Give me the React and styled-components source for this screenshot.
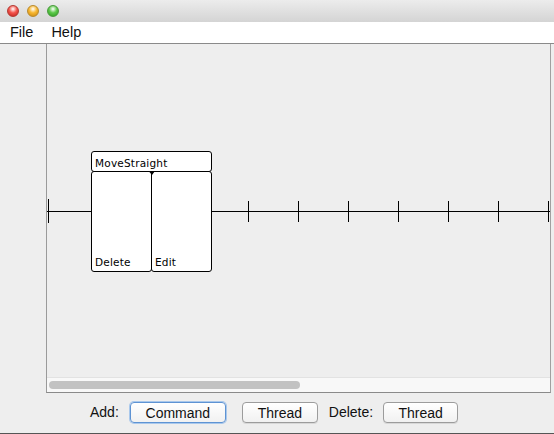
import React from 'react'
import styled, { createGlobalStyle } from 'styled-components'

const Global = createGlobalStyle`
  html, body {
    margin: 0;
    padding: 0;
    background: #eeeeee;
  }
  body {
    font-family: "Liberation Sans", Arial, sans-serif;
  }
`

const Window = styled.div`
  width: 554px;
  height: 434px;
  display: flex;
  flex-direction: column;
  background: #eeeeee;
  box-sizing: border-box;
  border-bottom: 1px solid #555555;
  overflow: hidden;
`

const TitleBar = styled.div`
  height: 22px;
  flex-shrink: 0;
  display: flex;
  align-items: center;
  gap: 8px;
  padding-left: 7px;
  box-sizing: border-box;
  background: linear-gradient(#ececec, #d4d4d4);
`

const Light = styled.span`
  width: 12px;
  height: 12px;
  border-radius: 50%;
  box-sizing: border-box;
  border: 1px solid ${p => p.$edge};
  background: radial-gradient(circle at 50% 30%, #ffffff 0%, ${p => p.$color} 45%, ${p => p.$dark} 100%);
`

const MenuBar = styled.div`
  height: 21px;
  flex-shrink: 0;
  display: flex;
  align-items: center;
  gap: 18px;
  padding-left: 10px;
  background: #ffffff;
  border-bottom: 1px solid #8a8a8a;
  font-size: 14.5px;
  color: #111;
`

const MenuItem = styled.span`
  line-height: 21px;
`

const Body = styled.div`
  display: flex;
  height: 349px;
  flex-shrink: 0;
`

const SideStrip = styled.div`
  width: 46px;
  flex-shrink: 0;
`

const Panel = styled.div`
  width: 505px;
  height: 349px;
  box-sizing: border-box;
  border-left: 1px solid #9a9a9a;
  border-right: 1px solid #a0a0a0;
  border-bottom: 1px solid #8a8a8a;
  display: flex;
  flex-direction: column;
`

const Canvas = styled.div`
  position: relative;
  flex: 1;
  overflow: hidden;
`

const Track = styled.div`
  height: 15px;
  flex-shrink: 0;
  box-sizing: border-box;
  border-top: 1px solid #e2e2e2;
  background: #f8f8f8;
  padding: 3px 0 0 2px;
`

const Thumb = styled.div`
  width: 251px;
  height: 8px;
  border-radius: 4px;
  background: #c2c2c2;
`

const Block = styled.div`
  position: absolute;
  left: 44px;
  top: 107px;
  width: 121px;
  display: flex;
  flex-direction: column;
  font-family: "DejaVu Sans", sans-serif;
  font-size: 10.5px;
  letter-spacing: 0.2px;
  color: #000;
`

const Header = styled.div`
  height: 21px;
  box-sizing: border-box;
  border: 1px solid #000;
  border-radius: 3px;
  padding: 3px 0 0 3px;
  line-height: 17px;
  background: #ffffff;
`

const Columns = styled.div`
  display: flex;
  margin-top: -1px;
`

const Cell = styled.div`
  width: 61px;
  height: 101px;
  box-sizing: border-box;
  border: 1px solid #000;
  border-radius: 3px;
  background: #ffffff;
  display: flex;
  align-items: flex-end;
  padding: 0 0 3px 3px;
  & + & {
    margin-left: -1px;
  }
`

const Notch = styled.span`
  position: absolute;
  left: 58px;
  top: 20px;
  width: 0;
  height: 0;
  border-left: 3px solid transparent;
  border-right: 3px solid transparent;
  border-top: 4px solid #000;
`

const Footer = styled.div`
  flex: 1;
  display: flex;
  align-items: flex-start;
  padding-left: 90px;
  padding-top: 9px;
  font-size: 14px;
  color: #111;
`

const Label = styled.span`
  line-height: 21px;
  margin-right: ${p => p.$gap}px;
`

const Button = styled.div`
  height: 21px;
  width: ${p => p.$w}px;
  box-sizing: border-box;
  display: flex;
  align-items: center;
  justify-content: center;
  border-radius: 4px;
  margin-right: ${p => p.$gap}px;
  background: linear-gradient(#ffffff, #f1f1f1);
  border: 1px solid ${p => (p.$focus ? '#5e93d3' : '#9c9c9c')};
  box-shadow: ${p => (p.$focus ? '0 0 0 1px #a9c8ec' : '0 1px 0 #d8d8d8')};
  font-size: 14px;
`

const ticks = [201, 251, 301, 351, 401, 451, 501]

export default function App() {
  return (
    <>
      <Global />
      <Window>
        <TitleBar>
          <Light $color="#f4554d" $dark="#c0201a" $edge="#b33a33" />
          <Light $color="#f7b731" $dark="#c9860e" $edge="#b98a2d" />
          <Light $color="#5cc84a" $dark="#2a9a1e" $edge="#4a9a3d" />
        </TitleBar>
        <MenuBar>
          <MenuItem>File</MenuItem>
          <MenuItem>Help</MenuItem>
        </MenuBar>
        <Body>
          <SideStrip />
          <Panel>
            <Canvas>
              <svg width="503" height="332" style={{ position: 'absolute', left: 0, top: 0 }}>
                <line x1="0" y1="167.5" x2="503" y2="167.5" stroke="#000" strokeWidth="1" />
                <line x1="1.5" y1="155" x2="1.5" y2="179" stroke="#000" strokeWidth="1" />
                {ticks.map(x => (
                  <line key={x} x1={x + 0.5} y1="157" x2={x + 0.5} y2="178" stroke="#000" strokeWidth="1" />
                ))}
              </svg>
              <Block>
                <Header>MoveStraight</Header>
                <Columns>
                  <Cell>Delete</Cell>
                  <Cell>Edit</Cell>
                </Columns>
                <Notch />
              </Block>
            </Canvas>
            <Track>
              <Thumb />
            </Track>
          </Panel>
        </Body>
        <Footer>
          <Label $gap={11}>Add:</Label>
          <Button $w={96} $focus $gap={16}>Command</Button>
          <Button $w={76} $gap={11}>Thread</Button>
          <Label $gap={10}>Delete:</Label>
          <Button $w={75} $gap={0}>Thread</Button>
        </Footer>
      </Window>
    </>
  )
}
